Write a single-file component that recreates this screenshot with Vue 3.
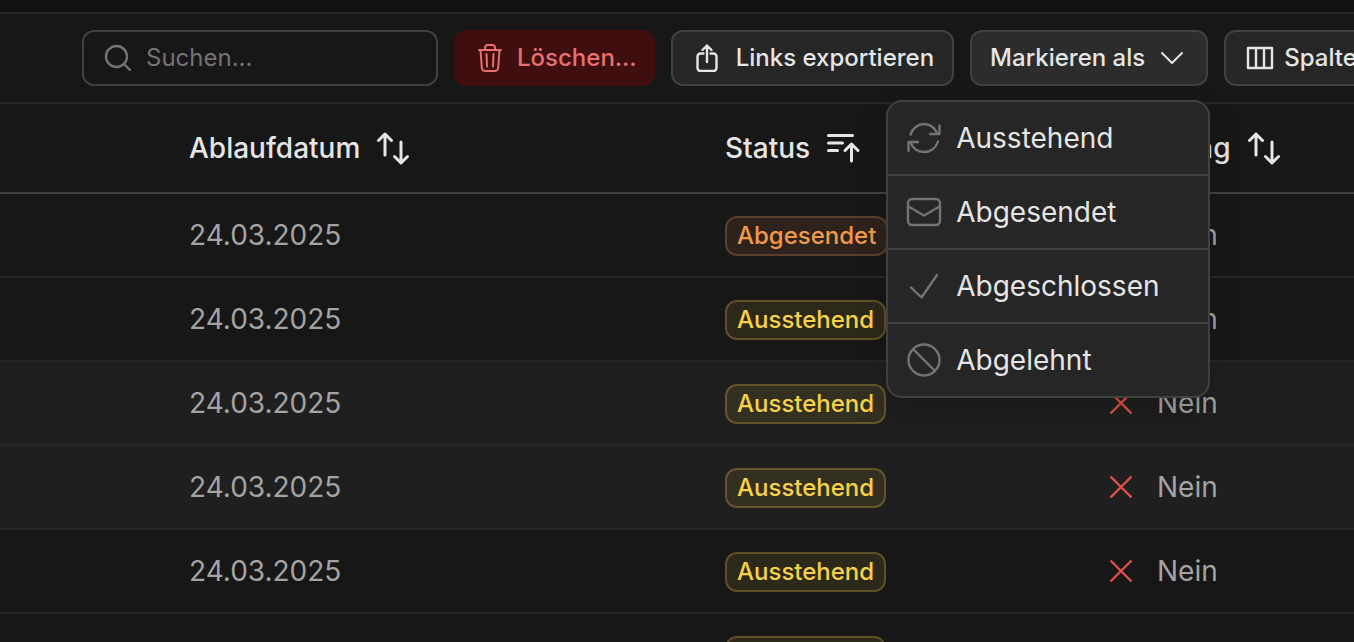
<script setup>
import { ref } from 'vue'

const search = ref('')

const rows = [
  { date: '24.03.2025', status: 'Abgesendet', tone: 'orange', reminder: 'Nein' },
  { date: '24.03.2025', status: 'Ausstehend', tone: 'yellow', reminder: 'Nein' },
  { date: '24.03.2025', status: 'Ausstehend', tone: 'yellow', reminder: 'Nein', selected: true },
  { date: '24.03.2025', status: 'Ausstehend', tone: 'yellow', reminder: 'Nein', selected: true },
  { date: '24.03.2025', status: 'Ausstehend', tone: 'yellow', reminder: 'Nein' },
  { date: '24.03.2025', status: 'Ausstehend', tone: 'yellow', reminder: 'Nein' }
]

const menuItems = [
  {
    label: 'Ausstehend',
    paths: ['M4.5 14.5C6.5 8.5 12 4 18 4c6 0 10.500 3.500 13.500 9.500', 'M33.500 5.500v8.500h-9.500', 'M32 21.500C30 28 24.500 32 18 32c-6 0-11-3.500-13.500-9.500', 'M2.500 31v-9h9.500']
  },
  {
    label: 'Abgesendet',
    paths: ['M6 5h24a4 4 0 0 1 4 4v18a4 4 0 0 1-4 4H6a4 4 0 0 1-4-4V9a4 4 0 0 1 4-4z', 'M2.500 12.500L18 21.500l15.500-9']
  },
  { label: 'Abgeschlossen', paths: ['M5 19.500l10.500 10L31 7'] },
  { label: 'Abgelehnt', paths: ['M18 2.500a15.500 15.500 0 1 1 0 31a15.500 15.500 0 1 1 0-31z', 'M7.500 7.500l21.500 21.500'] }
]
</script>

<template>
  <main class="page">
    <div class="topbar"></div>

    <div class="toolbar">
      <label class="search">
        <svg class="icon" width="28" height="28" viewBox="0 0 28 28" aria-hidden="true">
          <circle cx="12.500" cy="12.500" r="10.500" />
          <path d="M20 20l6 6" />
        </svg>
        <input v-model="search" type="text" placeholder="Suchen..." aria-label="Suchen" />
      </label>

      <button type="button" class="btn danger">
        <svg class="icon thin" width="28" height="28" viewBox="0 0 28 28" aria-hidden="true">
          <path d="M5 6h22M11 6V4a3 3 0 0 1 3-3h4a3 3 0 0 1 3 3v2M6.500 6l1.300 17.500a3.500 3.500 0 0 0 3.500 3.500h9.400a3.500 3.500 0 0 0 3.500-3.500L25.500 6M12.500 10l.5 12.500M19.500 10l-.5 12.500" />
        </svg>
        Löschen...
      </button>

      <button type="button" class="btn">
        <svg class="icon" width="28" height="28" viewBox="0 0 28 28" aria-hidden="true">
          <path d="M10.500 9.500H7.500a3 3 0 0 0-3 3V24a3 3 0 0 0 3 3h13a3 3 0 0 0 3-3V12.500a3 3 0 0 0-3-3h-3M14 18V1.500M9.500 6L14 1.500 18.500 6" />
        </svg>
        Links exportieren
      </button>

      <div class="dropdown">
        <button type="button" class="btn open" aria-haspopup="menu" aria-expanded="true">
          Markieren als
          <svg class="icon thin" width="24" height="24" viewBox="0 0 24 24" aria-hidden="true">
            <path d="M2 7l10 10L22 7" />
          </svg>
        </button>
        <div class="menu" role="menu">
          <button v-for="item in menuItems" :key="item.label" type="button" class="menu-item" role="menuitem">
            <svg class="icon" width="36" height="36" viewBox="0 0 36 36" aria-hidden="true">
              <path v-for="d in item.paths" :key="d" :d="d" />
            </svg>
            {{ item.label }}
          </button>
        </div>
      </div>

      <button type="button" class="btn columns">
        <svg class="icon" width="28" height="28" viewBox="0 0 28 28" aria-hidden="true">
          <path d="M2 4h24v20H2zM10 4v20M18 4v20" />
        </svg>
        Spalten
      </button>
    </div>

    <table class="table">
      <colgroup>
        <col class="col-select" />
        <col class="col-date" />
        <col class="col-status" />
        <col />
      </colgroup>
      <thead>
        <tr>
          <td></td>
          <th scope="col">
            <button type="button" class="sort">
              Ablaufdatum
              <svg class="icon bold" width="36" height="36" viewBox="0 0 36 36" aria-hidden="true">
                <path d="M10 25V4M3.500 10.500L10 4l6.500 6.500M26 12v21M19.500 26.500L26 33l6.500-6.500" />
              </svg>
            </button>
          </th>
          <th scope="col">
            <button type="button" class="sort">
              Status
              <svg class="icon bold" width="36" height="36" viewBox="0 0 36 36" aria-hidden="true">
                <path d="M3.500 5.500h24M3.500 13h14M3.500 20.500h9M26.500 31V14M20 20.500l6.500-6.500 6.500 6.500" />
              </svg>
            </button>
          </th>
          <th scope="col">
            <button type="button" class="sort">
              Warnung
              <svg class="icon bold" width="36" height="36" viewBox="0 0 36 36" aria-hidden="true">
                <path d="M10 25V4M3.500 10.500L10 4l6.500 6.500M26 12v21M19.500 26.500L26 33l6.500-6.500" />
              </svg>
            </button>
          </th>
        </tr>
      </thead>
      <tbody>
        <tr v-for="(row, i) in rows" :key="i" :class="{ selected: row.selected }">
          <td></td>
          <td>{{ row.date }}</td>
          <td><span class="badge" :class="row.tone">{{ row.status }}</span></td>
          <td>
            <span class="flag">
              <svg class="icon cross" width="24" height="24" viewBox="0 0 24 24" aria-hidden="true">
                <path d="M1.500 1.500l21 21M22.500 1.500l-21 21" />
              </svg>
              {{ row.reminder }}
            </span>
          </td>
        </tr>
      </tbody>
    </table>
  </main>
</template>

<style>
body {
  margin: 0;
  background: #171717;
}
</style>

<style scoped>
.page {
  height: 100vh;
  overflow: hidden;
  background: #171717;
  color: #e5e5e5;
  font-family: Inter, "Liberation Sans", sans-serif;
  font-size: 28px;
  line-height: 36px;
}

.topbar {
  height: 12px;
  background: #121212;
  border-bottom: 2px solid #262626;
}

.toolbar {
  display: flex;
  gap: 16px;
  padding: 16px 0 16px 82px;
  border-bottom: 2px solid #262626;
}

.icon {
  flex: none;
  fill: none;
  stroke: currentColor;
  stroke-width: 2.4;
  stroke-linecap: round;
  stroke-linejoin: round;
}

.icon.thin {
  stroke-width: 2;
}

.icon.bold {
  stroke-width: 3;
}

.search,
.btn {
  box-sizing: border-box;
  flex: none;
  display: flex;
  align-items: center;
  height: 56px;
  border: 2px solid #404040;
  border-radius: 12px;
  font-size: 24px;
  line-height: 32px;
}

.search {
  width: 356px;
  gap: 14px;
  padding: 0 20px;
  color: #737373;
}

.search input {
  flex: 1;
  min-width: 0;
  padding: 0;
  border: 0;
  outline: 0;
  background: transparent;
  color: #e5e5e5;
  font: inherit;
}

.search input::placeholder {
  color: #737373;
  opacity: 1;
}

.btn {
  gap: 15px;
  padding: 0 18px 0 20px;
  background: #262626;
  color: #e5e5e5;
  font-family: inherit;
  font-weight: 500;
  white-space: nowrap;
}

.btn.danger {
  padding: 0 16px 0 18px;
  border-color: #3f0e0e;
  background: #3f0e0e;
  color: #e87070;
}

.btn.open {
  padding: 0 22px 0 18px;
  background: #2c2c2c;
}

.btn.columns {
  gap: 10px;
}

.dropdown {
  position: relative;
  flex: none;
}

.menu {
  position: absolute;
  z-index: 1;
  top: 70px;
  right: -2px;
  box-sizing: border-box;
  width: 324px;
  overflow: hidden;
  border: 2px solid #404040;
  border-radius: 16px;
  background: #262626;
  box-shadow: 0 16px 32px rgba(0, 0, 0, 0.16);
}

.menu-item {
  display: flex;
  align-items: center;
  gap: 14px;
  width: 100%;
  padding: 18px;
  border: 0;
  background: transparent;
  color: #e5e5e5;
  font: inherit;
}

.menu-item + .menu-item {
  border-top: 2px solid #404040;
}

.menu-item .icon {
  color: #737373;
}

.table {
  width: 100%;
  table-layout: fixed;
  border-collapse: separate;
  border-spacing: 0;
}

.col-select {
  width: 173px;
}

.col-date {
  width: 536px;
}

.col-status {
  width: 384px;
}

.table th,
.table td {
  box-sizing: border-box;
  height: 84px;
  padding: 0 16px;
  border-bottom: 2px solid #262626;
  text-align: left;
  vertical-align: middle;
  white-space: nowrap;
}

.table thead th,
.table thead td {
  height: 90px;
  border-color: #404040;
}

.table tbody {
  color: #a3a3a3;
}

.selected td {
  background: #1f1f1f;
}

.sort {
  display: flex;
  align-items: center;
  gap: 15px;
  padding: 0;
  border: 0;
  background: transparent;
  color: #e5e5e5;
  font: inherit;
  font-weight: 500;
}

.badge {
  box-sizing: border-box;
  display: flex;
  align-items: center;
  width: max-content;
  height: 40px;
  margin-top: 2px;
  padding: 0 10px;
  border: 2px solid;
  border-radius: 12px;
  font-size: 24px;
  font-weight: 500;
}

.badge.orange {
  border-color: #5b3e27;
  background: #2d231c;
  color: #f2994a;
}

.badge.yellow {
  border-color: rgba(247, 200, 64, 0.32);
  background: rgba(250, 204, 60, 0.1);
  background-clip: padding-box;
  color: #f7d14a;
}

.flag {
  display: flex;
  align-items: center;
  gap: 24px;
}

.cross {
  color: #e0504a;
  stroke-linecap: butt;
}
</style>
